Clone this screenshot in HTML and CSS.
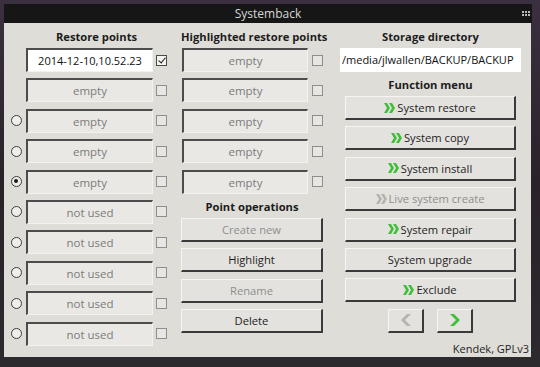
FILE: index.html
```html
<!DOCTYPE html>
<html>

<head>
    <meta charset="utf-8">
    <title>Systemback</title>
    <meta name="viewport" content="width=device-width, initial-scale=1">
    <link rel="stylesheet" href="styles.css">
</head>

<body>
    <div class="window">
        <div class="titlebar">
            <span class="title">Systemback</span>
            <svg class="grip" width="8" height="5" viewBox="0 0 8 5">
                <rect x="0" y="0" width="2" height="2" fill="#bbb"/>
                <rect x="3" y="0" width="2" height="2" fill="#bbb"/>
                <rect x="6" y="0" width="2" height="2" fill="#bbb"/>
                <rect x="0" y="3" width="2" height="2" fill="#bbb"/>
                <rect x="3" y="3" width="2" height="2" fill="#bbb"/>
                <rect x="6" y="3" width="2" height="2" fill="#bbb"/>
            </svg>
        </div>

        <div class="panel">
            <!-- restore points -->
            <div class="col col-points">
                <div class="heading heading-points">Restore points</div>
                <div class="list">
                    <div class="row"><span class="slot"></span><div class="field field-white">2014-12-10,10.52.23</div><span class="check checked"></span></div>
                    <div class="row"><span class="slot"></span><div class="field">empty</div><span class="check"></span></div>
                    <div class="row"><span class="slot radio"></span><div class="field">empty</div><span class="check"></span></div>
                    <div class="row"><span class="slot radio"></span><div class="field">empty</div><span class="check"></span></div>
                    <div class="row"><span class="slot radio on"></span><div class="field">empty</div><span class="check"></span></div>
                    <div class="row"><span class="slot radio"></span><div class="field">not used</div><span class="check"></span></div>
                    <div class="row"><span class="slot radio"></span><div class="field">not used</div><span class="check"></span></div>
                    <div class="row"><span class="slot radio"></span><div class="field">not used</div><span class="check"></span></div>
                    <div class="row"><span class="slot radio"></span><div class="field">not used</div><span class="check"></span></div>
                    <div class="row"><span class="slot radio"></span><div class="field">not used</div><span class="check"></span></div>
                </div>
            </div>

            <!-- highlighted points + operations -->
            <div class="col col-high">
                <div class="heading">Highlighted restore points</div>
                <div class="list">
                    <div class="row"><div class="field field-mid">empty</div><span class="check"></span></div>
                    <div class="row"><div class="field field-mid">empty</div><span class="check"></span></div>
                    <div class="row"><div class="field field-mid">empty</div><span class="check"></span></div>
                    <div class="row"><div class="field field-mid">empty</div><span class="check"></span></div>
                    <div class="row"><div class="field field-mid">empty</div><span class="check"></span></div>
                </div>
                <div class="heading heading-ops">Point operations</div>
                <div class="list">
                    <button class="btn" disabled>Create new</button>
                    <button class="btn">Highlight</button>
                    <button class="btn" disabled>Rename</button>
                    <button class="btn">Delete</button>
                </div>
            </div>

            <!-- storage + function menu -->
            <div class="col col-menu">
                <div class="heading">Storage directory</div>
                <div class="storage">/media/jlwallen/BACKUP/BACKUP</div>
                <div class="heading">Function menu</div>
                <div class="list">
                    <button class="btn btn-menu"><svg class="go" width="11" height="10" viewBox="0 0 11 10"><polygon points="0,0 3,0 6,5 3,10 0,10 3,5"/><polygon points="5,0 8,0 11,5 8,10 5,10 8,5"/></svg>System restore</button>
                    <button class="btn btn-menu"><svg class="go" width="11" height="10" viewBox="0 0 11 10"><polygon points="0,0 3,0 6,5 3,10 0,10 3,5"/><polygon points="5,0 8,0 11,5 8,10 5,10 8,5"/></svg>System copy</button>
                    <button class="btn btn-menu"><svg class="go" width="11" height="10" viewBox="0 0 11 10"><polygon points="0,0 3,0 6,5 3,10 0,10 3,5"/><polygon points="5,0 8,0 11,5 8,10 5,10 8,5"/></svg>System install</button>
                    <button class="btn btn-menu" disabled><svg class="go" width="11" height="10" viewBox="0 0 11 10"><polygon points="0,0 3,0 6,5 3,10 0,10 3,5"/><polygon points="5,0 8,0 11,5 8,10 5,10 8,5"/></svg>Live system create</button>
                    <button class="btn btn-menu"><svg class="go" width="11" height="10" viewBox="0 0 11 10"><polygon points="0,0 3,0 6,5 3,10 0,10 3,5"/><polygon points="5,0 8,0 11,5 8,10 5,10 8,5"/></svg>System repair</button>
                    <button class="btn btn-menu">System upgrade</button>
                    <button class="btn btn-menu"><svg class="go" width="11" height="10" viewBox="0 0 11 10"><polygon points="0,0 3,0 6,5 3,10 0,10 3,5"/><polygon points="5,0 8,0 11,5 8,10 5,10 8,5"/></svg>Exclude</button>
                    <div class="nav">
                        <button class="btn btn-nav" disabled><svg class="go" width="10" height="12" viewBox="0 0 10 12"><polygon points="10,0 6,0 0,6 6,12 10,12 4,6"/></svg></button>
                        <button class="btn btn-nav"><svg class="go" width="10" height="12" viewBox="0 0 10 12"><polygon points="0,0 4,0 10,6 4,12 0,12 6,6"/></svg></button>
                    </div>
                </div>
                <div class="credit">Kendek, GPLv3</div>
            </div>
        </div>
    </div>
</body>

</html>
```

FILE: styles.css
```css
body {
    margin: 0;
    padding: 0;
    overflow: hidden;
    height: 367px;
    background: linear-gradient(180deg, #3a3040 0%, #2a2228 50%, #2d2a2e 100%);
    font-family: "Open Sans", "DejaVu Sans", sans-serif;
    font-size: 11px;
    color: #222;
}

.window {
    margin: 4px 0 0 4px;
    width: 527px;
}

.titlebar {
    display: flex;
    align-items: center;
    height: 19px;
    margin-right: -1px;
    padding: 0 2px 0 14px;
    background: #161616;
    color: #d6d6d6;
}

.title {
    flex: 1;
    text-align: center;
    font-size: 12px;
}

.grip {
    display: block;
    margin-left: 4px;
}

.panel {
    display: flex;
    padding: 1px 0 1px 7px;
    background: #dfddd8;
}

.col {
    display: flex;
    flex-direction: column;
}

.col-points {
    width: 156px;
    margin-right: 14px;
}

.col-high {
    width: 142px;
    margin-right: 17px;
}

.col-menu {
    width: 181px;
}

.heading {
    height: 24px;
    line-height: 25px;
    text-align: center;
    font-weight: bold;
    font-size: 11.2px;
    white-space: nowrap;
    color: #1c1c1c;
}

.heading-points {
    padding-left: 15px;
}

.heading-ops {
    height: 24.4px;
    line-height: 26px;
}

.list {
    display: flex;
    flex-direction: column;
    gap: 6.4px;
}

.row {
    display: flex;
    align-items: center;
    height: 24px;
}

.slot {
    width: 11px;
    height: 11px;
    margin-right: 4px;
    box-sizing: border-box;
}

.radio {
    border: 1.5px solid #3c3c3c;
    border-radius: 50%;
    background: #efeeeb;
    position: relative;
}

.radio.on::after {
    content: "";
    position: absolute;
    left: 2px;
    top: 2px;
    width: 4px;
    height: 4px;
    border-radius: 50%;
    background: #1c1c1c;
}

.field {
    width: 127px;
    height: 24px;
    box-sizing: border-box;
    border-top: 2px solid #4c4c4c;
    border-left: 2px solid #4c4c4c;
    border-right: 1px solid #f3f2ef;
    border-bottom: 1px solid #f3f2ef;
    background: #eae8e4;
    color: #7b7b7b;
    text-align: center;
    line-height: 21px;
    font-size: 11.5px;
}

.field-white {
    background: #ffffff;
    color: #111;
    font-size: 11px;
}

.field-mid {
    width: 126px;
    margin-left: 1px;
}

.check {
    width: 11px;
    height: 11px;
    margin-left: 3px;
    box-sizing: border-box;
    border: 1px solid #8e8e8e;
    background: #e8e6e2;
    position: relative;
}

.col-high .check {
    margin-left: 4px;
}

.check.checked {
    border-color: #4a4a4a;
    background: #f4f3f1;
}

.check.checked::after {
    content: "";
    position: absolute;
    left: 3px;
    top: 0px;
    width: 3px;
    height: 6px;
    border-right: 1.5px solid #1a1a1a;
    border-bottom: 1.5px solid #1a1a1a;
    transform: rotate(40deg);
}

.btn {
    display: flex;
    align-items: center;
    justify-content: center;
    gap: 2px;
    height: 24px;
    padding: 0;
    box-sizing: border-box;
    border-top: 1px solid #f6f5f2;
    border-left: 1px solid #f6f5f2;
    border-right: 2px solid #3a3a3a;
    border-bottom: 2px solid #3a3a3a;
    border-radius: 0;
    background: #e4e2de;
    font-family: inherit;
    font-size: 11.2px;
    color: #1e1e1e;
}

.btn:disabled {
    color: #8e8e8e;
}

.btn-menu {
    width: 171px;
    margin-left: 5px;
}

.go {
    display: block;
    fill: #3fbf3a;
}

.btn:disabled .go {
    fill: #b4b4b1;
}

.nav {
    display: flex;
    justify-content: center;
    gap: 13px;
    height: 24px;
}

.btn-nav {
    width: 36px;
}

.storage {
    height: 24px;
    line-height: 24px;
    padding-left: 2px;
    background: #ffffff;
    color: #111;
    white-space: nowrap;
    overflow: hidden;
}

.credit {
    align-self: flex-end;
    margin: 9px -8px 0 0;
    height: 14px;
    line-height: 14px;
    white-space: nowrap;
    color: #1e1e1e;
}
```
